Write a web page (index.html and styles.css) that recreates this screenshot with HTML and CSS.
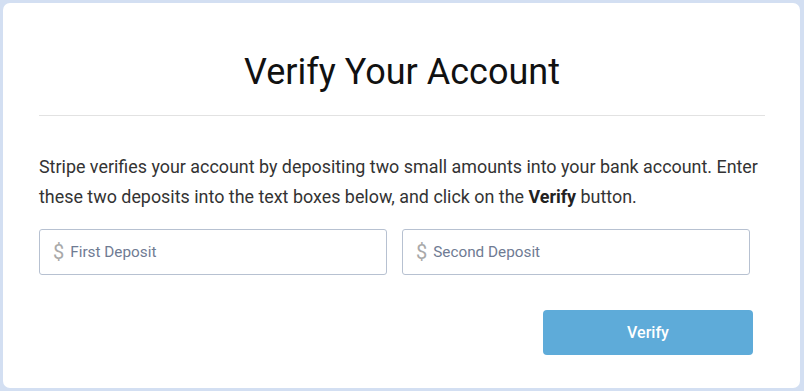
FILE: index.html
```html
<!DOCTYPE html>
<html lang="en">
<head>
<meta charset="utf-8">
<title>Verify Your Account</title>
<link rel="stylesheet" href="styles.css">
</head>
<body>
<div class="card">
  <h1 class="title">Verify Your Account</h1>
  <hr class="divider">
  <p class="intro">Stripe verifies your account by depositing two small amounts into your bank account. Enter these two deposits into the text boxes below, and click on the <strong>Verify</strong> button.</p>
  <div class="fields">
    <div class="col">
      <label class="field"><span class="dollar">$</span><input class="input" type="text" placeholder="First Deposit"></label>
    </div>
    <div class="col">
      <label class="field"><span class="dollar">$</span><input class="input" type="text" placeholder="Second Deposit"></label>
    </div>
  </div>
  <div class="actions">
    <button class="btn" type="button">Verify</button>
  </div>
</div>
</body>
</html>
```

FILE: styles.css
```css
* { box-sizing: border-box; }
html, body { height: 100%; }
body {
  margin: 0;
  padding: 3px 4px 3px 3px;
  background: #d3dff2;
  font-family: Roboto, "Noto Sans", sans-serif;
  color: #222;
}
.card {
  background: #fff;
  border-radius: 7px;
  height: 385px;
  padding: 0 35px 0 36px;
  overflow: hidden;
}
.title {
  margin: 0;
  padding-top: 48px;
  font-size: 36px;
  font-weight: 400;
  line-height: 42px;
  text-align: center;
  color: #111;
}
.divider {
  margin: 22px 0 0;
  border: 0;
  border-top: 1px solid #e2e2e2;
  height: 0;
}
.intro {
  margin: 36px 0 0;
  font-size: 17.9px;
  line-height: 30px;
  color: #333;
}
.intro strong { font-weight: 700; color: #222; }
.fields {
  display: flex;
  margin-top: 17px;
}
.col {
  flex: 1;
  padding-right: 15px;
}
.field {
  display: flex;
  align-items: center;
  height: 46px;
  border: 1px solid #b7c1d1;
  border-radius: 3px;
  padding-left: 13px;
  background: #fff;
}
.dollar {
  font-size: 20px;
  color: #a9a9a9;
  margin-right: 6px;
  line-height: 1;
}
.input {
  border: 0;
  outline: none;
  flex: 1;
  font-family: Roboto, "Noto Sans", sans-serif;
  font-size: 15.3px;
  color: #333;
  padding: 0;
  background: transparent;
}
.input::placeholder { color: #6f7b93; opacity: 1; }
.actions {
  display: flex;
  justify-content: flex-end;
  margin-top: 35px;
  padding-right: 12px;
}
.btn {
  width: 210px;
  height: 45px;
  border: 0;
  border-radius: 4px;
  background: #5eabd9;
  color: #fff;
  font-family: Roboto, "Noto Sans", sans-serif;
  font-size: 16px;
  font-weight: 500;
}
```
